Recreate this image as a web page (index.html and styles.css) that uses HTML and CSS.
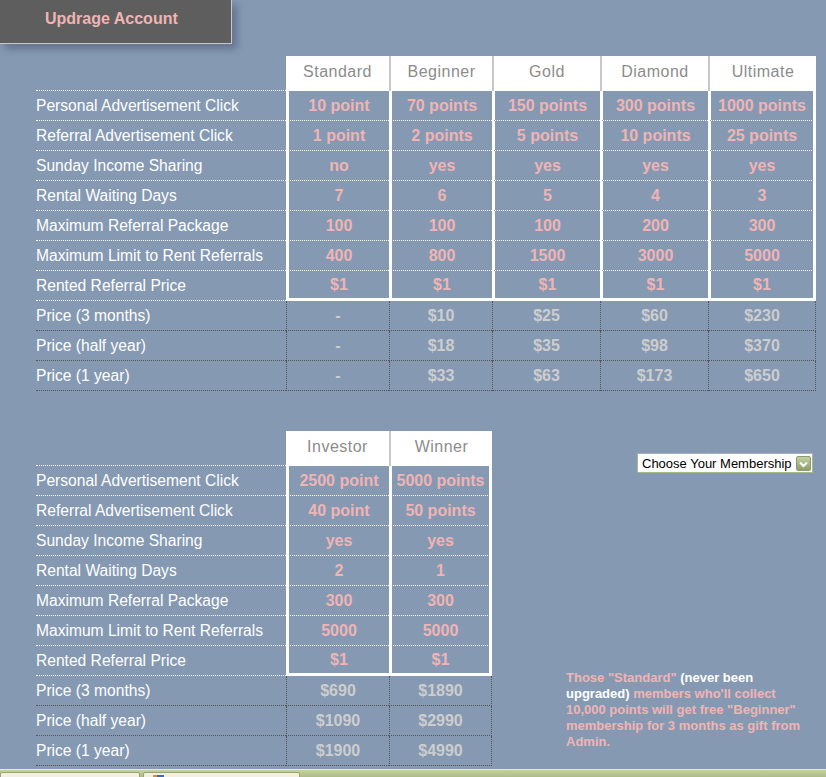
FILE: index.html
```html
<!DOCTYPE html>
<html lang="en">
<head>
<meta charset="utf-8">
<title>Updrage Account</title>
<link rel="stylesheet" href="styles.css">
</head>
<body>
<div class="tab">Updrage Account</div>

<div class="content">
  <div class="plans five">
    <div class="c corner"></div>
    <div class="c hd">Standard</div>
    <div class="c hd sep">Beginner</div>
    <div class="c hd sep">Gold</div>
    <div class="c hd sep">Diamond</div>
    <div class="c hd sep">Ultimate</div>

    <div class="c lbl">Personal Advertisement Click</div>
    <div class="c val">10 point</div><div class="c val">70 points</div><div class="c val">150 points</div><div class="c val">300 points</div><div class="c val end">1000 points</div>

    <div class="c lbl">Referral Advertisement Click</div>
    <div class="c val">1 point</div><div class="c val">2 points</div><div class="c val">5 points</div><div class="c val">10 points</div><div class="c val end">25 points</div>

    <div class="c lbl">Sunday Income Sharing</div>
    <div class="c val">no</div><div class="c val">yes</div><div class="c val">yes</div><div class="c val">yes</div><div class="c val end">yes</div>

    <div class="c lbl">Rental Waiting Days</div>
    <div class="c val">7</div><div class="c val">6</div><div class="c val">5</div><div class="c val">4</div><div class="c val end">3</div>

    <div class="c lbl">Maximum Referral Package</div>
    <div class="c val">100</div><div class="c val">100</div><div class="c val">100</div><div class="c val">200</div><div class="c val end">300</div>

    <div class="c lbl">Maximum Limit to Rent Referrals</div>
    <div class="c val">400</div><div class="c val">800</div><div class="c val">1500</div><div class="c val">3000</div><div class="c val end">5000</div>

    <div class="c lbl">Rented Referral Price</div>
    <div class="c val last">$1</div><div class="c val last">$1</div><div class="c val last">$1</div><div class="c val last">$1</div><div class="c val last end">$1</div>

    <div class="c lbl p">Price (3 months)</div>
    <div class="c pr">-</div><div class="c pr">$10</div><div class="c pr">$25</div><div class="c pr">$60</div><div class="c pr end">$230</div>

    <div class="c lbl p">Price (half year)</div>
    <div class="c pr">-</div><div class="c pr">$18</div><div class="c pr">$35</div><div class="c pr">$98</div><div class="c pr end">$370</div>

    <div class="c lbl p">Price (1 year)</div>
    <div class="c pr">-</div><div class="c pr">$33</div><div class="c pr">$63</div><div class="c pr">$173</div><div class="c pr end">$650</div>
  </div>

  <div class="lower">
    <div class="plans two">
      <div class="c corner"></div>
      <div class="c hd">Investor</div>
      <div class="c hd sep">Winner</div>

      <div class="c lbl">Personal Advertisement Click</div>
      <div class="c val">2500 point</div><div class="c val end">5000 points</div>

      <div class="c lbl">Referral Advertisement Click</div>
      <div class="c val">40 point</div><div class="c val end">50 points</div>

      <div class="c lbl">Sunday Income Sharing</div>
      <div class="c val">yes</div><div class="c val end">yes</div>

      <div class="c lbl">Rental Waiting Days</div>
      <div class="c val">2</div><div class="c val end">1</div>

      <div class="c lbl">Maximum Referral Package</div>
      <div class="c val">300</div><div class="c val end">300</div>

      <div class="c lbl">Maximum Limit to Rent Referrals</div>
      <div class="c val">5000</div><div class="c val end">5000</div>

      <div class="c lbl">Rented Referral Price</div>
      <div class="c val last">$1</div><div class="c val last end">$1</div>

      <div class="c lbl p">Price (3 months)</div>
      <div class="c pr">$690</div><div class="c pr end">$1890</div>

      <div class="c lbl p">Price (half year)</div>
      <div class="c pr">$1090</div><div class="c pr end">$2990</div>

      <div class="c lbl p">Price (1 year)</div>
      <div class="c pr">$1900</div><div class="c pr end">$4990</div>
    </div>

    <div class="aside">
      <div class="select">
        <span class="select-text">Choose Your Membership</span>
        <span class="arrow"><svg width="13" height="12" viewBox="0 0 13 12"><path d="M3 4.5 L6.5 8 L10 4.5" fill="none" stroke="#ffffff" stroke-width="2"/></svg></span>
      </div>
      <p class="note">Those "Standard" <span class="hl">(never been</span><br><span class="hl">upgraded)</span> members who'll collect<br>10,000 points will get free "Beginner"<br>membership for 3 months as gift from<br>Admin.</p>
    </div>
  </div>
</div>

<div class="taskbar">
  <div class="task first"></div>
  <div class="task second"><span class="task-icon"></span></div>
</div>
</body>
</html>
```

FILE: styles.css
```css
html {
  overflow: hidden;
  background: #8599b3;
}

body {
  margin: 0;
  width: 826px;
  height: 777px;
  overflow: hidden;
  background: #8599b3;
  font-family: "Liberation Sans", Arial, sans-serif;
}

.tab {
  box-sizing: border-box;
  width: 232px;
  height: 44px;
  background: #5e5e5e;
  border-right: 1px solid #c8c8c8;
  border-bottom: 1px solid #c8c8c8;
  box-shadow: 5px 5px 7px rgba(40, 50, 70, 0.35);
  display: flex;
  align-items: center;
  padding: 0 0 5px 45px;
  color: #f0b4b4;
  font-weight: bold;
  font-size: 16px;
}

.content {
  padding-left: 36px;
}

.plans {
  display: grid;
  grid-template-rows: 35px;
  grid-auto-rows: 30px;
}

.plans.five {
  margin-top: 12px;
  grid-template-columns: 250px 103px 103px 108px 108px 108px;
}

.plans.two {
  grid-template-columns: 250px 103px 103px;
  flex: none;
}

.c {
  box-sizing: border-box;
  display: flex;
  align-items: center;
  white-space: nowrap;
}

.corner {
  border-bottom: 1px dotted #ffffff;
}

.hd {
  background: #ffffff;
  color: #8c8c8c;
  justify-content: center;
  font-size: 16px;
  letter-spacing: 0.5px;
  padding-bottom: 4px;
}

.hd.sep {
  border-left: 2px solid #c8c8c8;
}

.lbl {
  color: #ffffff;
  font-size: 15.6px;
  border-bottom: 1px dotted #ffffff;
}

.lbl.p {
  border-bottom: 1px dotted #555555;
}

.val {
  justify-content: center;
  color: #f0b4b4;
  font-weight: bold;
  font-size: 16px;
  border-left: 3px solid #ffffff;
  border-bottom: 1px dotted #ffffff;
}

.val.end {
  border-right: 3px solid #ffffff;
}

.val.last {
  border-bottom: 3px solid #ffffff;
}

.pr {
  justify-content: center;
  color: #cdcdcd;
  font-weight: bold;
  font-size: 16px;
  border-left: 1px dotted #555555;
  border-bottom: 1px dotted #555555;
}

.pr.end {
  border-right: 1px dotted #555555;
}

.lower {
  display: flex;
  margin-top: 40px;
}

.aside {
  width: 250px;
  margin-left: 74px;
  display: flex;
  flex-direction: column;
}

.select {
  align-self: flex-end;
  margin-right: 3px;
  margin-top: 22px;
  box-sizing: border-box;
  width: 176px;
  height: 20px;
  border: 1px solid #a5b98d;
  background: #ffffff;
  display: flex;
  align-items: center;
  justify-content: space-between;
  padding-left: 4px;
  font-size: 13px;
  color: #000000;
}

.arrow {
  box-sizing: border-box;
  width: 15px;
  height: 15px;
  margin: 1px 1px 0 0;
  border: 1px solid #8c9c6c;
  border-radius: 2px;
  background: linear-gradient(#c4d0a4, #a3b382 60%, #8e9e6c);
  display: flex;
  align-items: center;
  justify-content: center;
}

.arrow svg {
  display: block;
}

.note {
  margin: auto 0 16px 0;
  font-size: 13px;
  font-weight: bold;
  line-height: 16px;
  color: #f0b4b4;
  white-space: nowrap;
}

.note .hl {
  color: #ffffff;
}

.taskbar {
  margin-top: 3px;
  height: 24px;
  background: linear-gradient(#e2ecc4 0, #e2ecc4 1px, #c4d29e 1px, #aebd88 8px);
  display: flex;
  gap: 3px;
  padding-top: 3px;
  box-sizing: border-box;
}

.task {
  box-sizing: border-box;
  height: 20px;
  background: #f1f0e2;
  border: 1px solid #9aa27c;
  border-radius: 2px 2px 0 0;
}

.task.first {
  width: 140px;
}

.task.second {
  width: 157px;
  padding: 2px 0 0 9px;
}

.task-icon {
  display: block;
  width: 11px;
  height: 10px;
  background: linear-gradient(90deg, #e8862a 0 40%, #3a6bc4 40%);
}
```
